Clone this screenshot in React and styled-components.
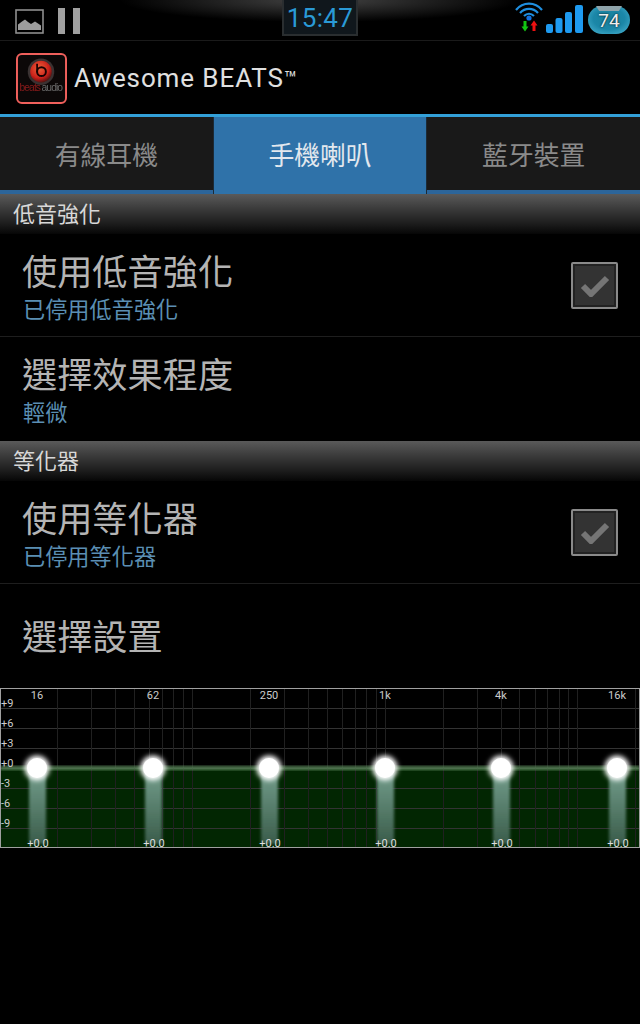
import React from "react";
import styled, { createGlobalStyle } from "styled-components";

const GlobalStyle = createGlobalStyle`
  html, body {
    margin: 0;
    padding: 0;
    background: #000;
  }
  * {
    box-sizing: border-box;
  }
`;

const CJK = `"Roboto", "Noto Sans CJK TC", sans-serif`;

const Screen = styled.div`
  width: 640px;
  height: 1024px;
  background: #000;
  display: flex;
  flex-direction: column;
  overflow: hidden;
  font-family: ${CJK};
`;

const StatusBar = styled.div`
  height: 41px;
  flex: none;
  display: flex;
  align-items: flex-start;
  justify-content: space-between;
  border-bottom: 1px solid #1a1a1a;
  background: radial-gradient(ellipse 200px 22px at 320px 0, #444 0%, #222 50%, #000 100%);
  position: relative;
`;

const StatusLeft = styled.div`
  display: flex;
  align-items: center;
  gap: 14px;
  padding: 8px 0 0 15px;
`;

const StatusRight = styled.div`
  display: flex;
  align-items: flex-start;
  padding: 2px 10px 0 0;
  gap: 3px;
`;

const Clock = styled.div`
  position: absolute;
  left: 282px;
  top: 0;
  width: 76px;
  height: 36px;
  background: #10171c;
  border: 2px solid #2a2e30;
  border-top: none;
  color: #2a9ad6;
  font-size: 26px;
  line-height: 37px;
  text-align: center;
  letter-spacing: 0.4px;
`;

const SignalWrap = styled.div`
  margin-top: 3px;
`;

const Battery = styled.div`
  position: relative;
  width: 42px;
  height: 28px;
  margin: 4px 0 0 2px;
  border-radius: 14px;
  background: radial-gradient(ellipse 26px 18px at 50% 45%, #178099 0%, #1b87a8 60%, #3fa9c8 100%);
  color: #eee;
  font-size: 19px;
  line-height: 29px;
  text-align: center;
  text-shadow: 0 0 2px #000;

  &::before {
    content: "";
    position: absolute;
    left: 8px;
    right: 8px;
    top: 0;
    height: 5px;
    background: #8fa3aa;
    clip-path: polygon(0 0, 100% 0, 88% 100%, 12% 100%);
  }

  span {
    position: relative;
  }
`;

const ActionBar = styled.div`
  height: 73px;
  flex: none;
  display: flex;
  align-items: center;
  gap: 8px;
  padding: 2px 0 0 16px;
`;

const AppTitle = styled.div`
  color: #e0e0e0;
  font-size: 26px;
  letter-spacing: 0.9px;
  margin: -2px 0 0 -1px;
`;

const Trademark = styled.span`
  font-size: 21px;
  letter-spacing: 0;
  vertical-align: 1px;
`;

const Tabs = styled.div`
  height: 80px;
  flex: none;
  display: flex;
  gap: 1px;
  border-top: 3px solid #33a0d8;
  background: #1c2a36;
`;

const Tab = styled.div`
  flex: 1;
  display: flex;
  align-items: center;
  justify-content: center;
  padding-bottom: 1px;
  font-size: 25.8px;
  color: ${(p) => (p.$active ? "#e2e8ee" : "#8a8a8a")};
  background: ${(p) => (p.$active ? "#2f72a9" : "#191919")};
  border-bottom: 4px solid ${(p) => (p.$active ? "#2f72a9" : "#2c659a")};
`;

const SectionHeader = styled.div`
  height: 40px;
  flex: none;
  display: flex;
  align-items: center;
  padding: 0 0 4px 13px;
  font-size: 22px;
  color: #d8d8d8;
  background: linear-gradient(#5a5a5a 0%, #3c3c3c 35%, #1c1c1c 75%, #060606 100%);
`;

const Row = styled.div`
  height: ${(p) => p.$h || 103}px;
  flex: none;
  display: flex;
  align-items: center;
  justify-content: space-between;
  padding: 0 22px;
  border-bottom: ${(p) => (p.$last ? "none" : "1px solid #1e1e1e")};
`;

const RowText = styled.div`
  display: flex;
  flex-direction: column;
  padding-top: ${(p) => p.$top ?? 4}px;
`;

const RowTitle = styled.div`
  color: #b4b4b4;
  font-size: 35.2px;
  line-height: 46px;
`;

const RowSub = styled.div`
  color: #5b8fb3;
  font-size: 22.2px;
  line-height: 29px;
  margin-left: 1px;
`;

const CheckBox = styled.div`
  width: 47px;
  height: 47px;
  flex: none;
  display: flex;
  align-items: center;
  justify-content: center;
  background: #333;
  border: 2px solid #8a8a8a;
  border-radius: 2px;
  box-shadow: inset 0 0 0 2px #222;
`;

const Chart = styled.svg`
  display: block;
  flex: none;
  overflow: visible;
`;

const bands = [
  { x: 37, label: "16" },
  { x: 153, label: "62" },
  { x: 269, label: "250" },
  { x: 385, label: "1k" },
  { x: 501, label: "4k" },
  { x: 617, label: "16k" },
];

const levels = [
  { y: 20, label: "+9" },
  { y: 40, label: "+6" },
  { y: 60, label: "+3" },
  { y: 80, label: "+0" },
  { y: 100, label: "-3" },
  { y: 120, label: "-6" },
  { y: 140, label: "-9" },
];

// log spaced frequency lines, same scale as the bands
const freqX = (f) => Math.round(38.5 + 192.7 * Math.log10(f / 16)) + 0.5;
const freqs = [];
[10, 100, 1000, 10000].forEach((d) => {
  for (let i = 1; i < 10; i++) {
    const f = d * i;
    if (f >= 20 && f <= 20000) freqs.push(f);
  }
});
freqs.push(20000);

function PictureIcon() {
  return (
    <svg width="29" height="25" viewBox="0 0 29 25">
      <rect x="1" y="1" width="27" height="23" fill="none" stroke="#8e8e8e" strokeWidth="1.6" />
      <path d="M3 21V15.500l4-3 3-2 3 2.500 3 2 4-2.500 3 2 3 2v4.500z" fill="#9c9c9c" />
    </svg>
  );
}

function PauseIcon() {
  return (
    <svg width="22" height="26" viewBox="0 0 22 26">
      <rect x="0" y="0" width="7" height="26" fill="#a0a0a0" />
      <rect x="15" y="0" width="7" height="26" fill="#a0a0a0" />
    </svg>
  );
}

function WifiIcon() {
  return (
    <svg width="28" height="30" viewBox="0 0 28 30">
      <path d="M1 8C8 -0.500 20 -0.500 27 8" fill="none" stroke="#1f8fe0" strokeWidth="2.200" />
      <path d="M5 11C10 5.500 18 5.500 23 11" fill="none" stroke="#1f8fe0" strokeWidth="2.200" />
      <path d="M9 14C12 11 16 11 19 14" fill="none" stroke="#1f8fe0" strokeWidth="2.200" />
      <circle cx="14" cy="16" r="2.600" fill="#1270e0" />
      <path d="M8.500 19h3v5.500h2L10 29.500l-3.500-5h2z" fill="#12c412" />
      <path d="M17.500 29v-5.500h-2l3.500-5 3.500 5h-2V29z" fill="#ee1111" />
    </svg>
  );
}

function SignalIcon() {
  return (
    <svg width="37" height="28" viewBox="0 0 37 28">
      <rect x="0" y="19" width="7" height="9" rx="2" fill="#1e9af0" />
      <rect x="9.500" y="13" width="7" height="15" rx="2" fill="#1e9af0" />
      <rect x="19" y="7" width="7" height="21" rx="2" fill="#1e9af0" />
      <rect x="29" y="0" width="8" height="28" rx="2" fill="#1e9af0" />
    </svg>
  );
}

function BeatsLogo() {
  return (
    <svg width="51" height="51" viewBox="0 0 52 52">
      <defs>
        <radialGradient id="beatsDisc" cx="0.42" cy="0.35" r="0.65">
          <stop offset="0" stopColor="#f0603a" />
          <stop offset="0.7" stopColor="#c8201a" />
          <stop offset="1" stopColor="#5a1210" />
        </radialGradient>
        <filter id="logoSoft">
          <feGaussianBlur stdDeviation="0.400" />
        </filter>
      </defs>
      <rect x="1" y="1" width="50" height="50" rx="5" fill="#0c0808" stroke="#f0605c" strokeWidth="2" />
      <g filter="url(#logoSoft)">
        <circle cx="25.500" cy="19" r="13.500" fill="#3a3030" />
        <circle cx="25.500" cy="19" r="11" fill="url(#beatsDisc)" />
        <circle cx="26" cy="19" r="4.500" fill="none" stroke="#1a0505" strokeWidth="2" />
        <path d="M21.500 11v9" stroke="#1a0505" strokeWidth="1.800" />
        <text x="3.500" y="39" fontFamily="Liberation Sans" fontSize="10.500" fill="#8a1a1a" textLength="22">beats</text>
        <text x="26" y="39" fontFamily="Liberation Sans" fontSize="10.500" fill="#6a6a6a" textLength="22">audio</text>
      </g>
    </svg>
  );
}

function CheckMark() {
  return (
    <svg width="30" height="24" viewBox="0 0 30 24">
      <path d="M3 13l8 8L27 5" fill="none" stroke="#757575" strokeWidth="6" />
    </svg>
  );
}

function Equalizer() {
  return (
    <Chart width="640" height="160" viewBox="0 0 640 160">
      <defs>
        <linearGradient id="knobBar" x1="0" y1="0" x2="0" y2="1">
          <stop offset="0" stopColor="#729c8a" />
          <stop offset="1" stopColor="#3a5c4a" />
        </linearGradient>
        <filter id="glow" x="-50%" y="-50%" width="200%" height="200%">
          <feGaussianBlur stdDeviation="2.500" />
        </filter>
        <filter id="barBlur" x="-20%" y="-5%" width="140%" height="110%">
          <feGaussianBlur stdDeviation="1.500" />
        </filter>
      </defs>

      <rect x="0" y="81" width="640" height="78" fill="#022602" />

      {levels.map((l) => (
        <line key={l.y} x1="0" x2="640" y1={l.y + 0.5} y2={l.y + 0.5} stroke="#333" />
      ))}
      {freqs.map((f) => (
        <line key={f} x1={freqX(f)} x2={freqX(f)} y1="0" y2="159" stroke="#202020" />
      ))}

      <rect x="0" y="78" width="640" height="4" fill="#517a51" filter="url(#barBlur)" />
      <rect x="0.500" y="0.500" width="639" height="159" fill="none" stroke="#a0a0a0" />

      {levels.map((l) => (
        <text key={l.label} x="1" y={l.y - 1} fontFamily="Roboto" fontSize="11" fill="#ccc">
          {l.label}
        </text>
      ))}

      {bands.map((b) => (
        <g key={b.x}>
          <rect x={b.x - 8} y="84" width="17" height="72" fill="url(#knobBar)" filter="url(#barBlur)" />
          <circle cx={b.x} cy="80" r="12.500" fill="#fff" filter="url(#glow)" />
          <circle cx={b.x} cy="80" r="10" fill="#fff" />
          <text x={b.x} y="11" textAnchor="middle" fontFamily="Roboto" fontSize="11" fill="#ccc">
            {b.label}
          </text>
          <text x={b.x + 1} y="158.500" textAnchor="middle" fontFamily="Roboto" fontSize="11" fill="#ddd">
            +0.0
          </text>
        </g>
      ))}
    </Chart>
  );
}

export default function App() {
  return (
    <>
      <GlobalStyle />
      <Screen>
        <StatusBar>
          <StatusLeft>
            <PictureIcon />
            <PauseIcon />
          </StatusLeft>
          <Clock>15:47</Clock>
          <StatusRight>
            <WifiIcon />
            <SignalWrap>
              <SignalIcon />
            </SignalWrap>
            <Battery>
              <span>74</span>
            </Battery>
          </StatusRight>
        </StatusBar>

        <ActionBar>
          <BeatsLogo />
          <AppTitle>
            Awesome BEATS<Trademark>™</Trademark>
          </AppTitle>
        </ActionBar>

        <Tabs>
          <Tab>有線耳機</Tab>
          <Tab $active>手機喇叭</Tab>
          <Tab>藍牙裝置</Tab>
        </Tabs>

        <SectionHeader>低音強化</SectionHeader>
        <Row>
          <RowText>
            <RowTitle>使用低音強化</RowTitle>
            <RowSub>已停用低音強化</RowSub>
          </RowText>
          <CheckBox>
            <CheckMark />
          </CheckBox>
        </Row>
        <Row $h={104} $last>
          <RowText $top={2}>
            <RowTitle>選擇效果程度</RowTitle>
            <RowSub>輕微</RowSub>
          </RowText>
        </Row>

        <SectionHeader>等化器</SectionHeader>
        <Row>
          <RowText>
            <RowTitle>使用等化器</RowTitle>
            <RowSub>已停用等化器</RowSub>
          </RowText>
          <CheckBox>
            <CheckMark />
          </CheckBox>
        </Row>
        <Row $h={104} $last>
          <RowText>
            <RowTitle>選擇設置</RowTitle>
          </RowText>
        </Row>

        <Equalizer />
      </Screen>
    </>
  );
}
